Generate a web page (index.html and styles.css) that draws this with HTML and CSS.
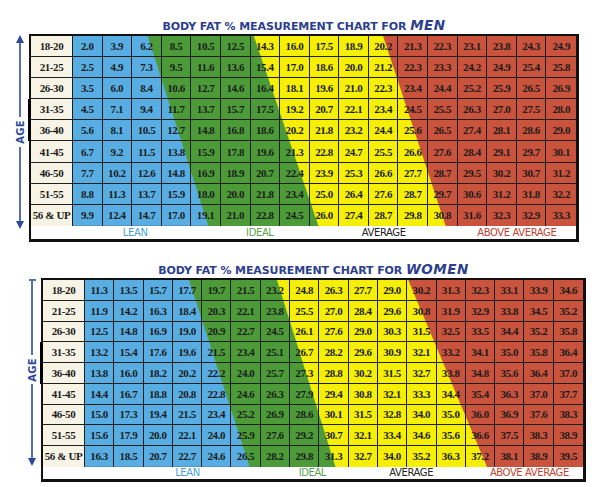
FILE: index.html
```html
<!DOCTYPE html>
<html>
	<head>
		<meta charset="UTF-8">
		<title>Body Fat % Measurement Chart</title>
		<link rel="stylesheet" href="styles.css">
	</head>
	<body>
	<div class="page">
		<!-- men -->
		<div class="chart men">
			<h2 class="title">BODY FAT % MEASUREMENT CHART FOR <em>MEN</em></h2>
			<div class="axis">
				<i class="tip_up"></i><i class="line"></i><span class="label">AGE</span><i class="line"></i><i class="tip_down"></i>
			</div>
			<div class="tbl">
				<div class="body">
					<div class="ages">
						<b>18-20</b><b>21-25</b><b>26-30</b><b>31-35</b><b>36-40</b><b>41-45</b><b>46-50</b><b>51-55</b><b>56 &amp; UP</b>
					</div>
					<div class="vals">
						<svg class="bands" viewBox="0 0 498 188" preserveAspectRatio="none">
							<rect width="498" height="188" fill="#58aee3"/>
							<polygon points="74,0 498,0 498,188 134,188" fill="#4c9b38"/>
							<polygon points="179,0 498,0 498,188 243,188" fill="#f5ef05"/>
							<polygon points="307,0 498,0 498,188 369,188" fill="#c9533d"/>
						</svg>
						<div class="cells">
							<span>2.0</span><span>3.9</span><span>6.2</span><span>8.5</span><span>10.5</span><span>12.5</span><span>14.3</span><span>16.0</span><span>17.5</span><span>18.9</span><span>20.2</span><span>21.3</span><span>22.3</span><span>23.1</span><span>23.8</span><span>24.3</span><span>24.9</span>
							<span>2.5</span><span>4.9</span><span>7.3</span><span>9.5</span><span>11.6</span><span>13.6</span><span>15.4</span><span>17.0</span><span>18.6</span><span>20.0</span><span>21.2</span><span>22.3</span><span>23.3</span><span>24.2</span><span>24.9</span><span>25.4</span><span>25.8</span>
							<span>3.5</span><span>6.0</span><span>8.4</span><span>10.6</span><span>12.7</span><span>14.6</span><span>16.4</span><span>18.1</span><span>19.6</span><span>21.0</span><span>22.3</span><span>23.4</span><span>24.4</span><span>25.2</span><span>25.9</span><span>26.5</span><span>26.9</span>
							<span>4.5</span><span>7.1</span><span>9.4</span><span>11.7</span><span>13.7</span><span>15.7</span><span>17.5</span><span>19.2</span><span>20.7</span><span>22.1</span><span>23.4</span><span>24.5</span><span>25.5</span><span>26.3</span><span>27.0</span><span>27.5</span><span>28.0</span>
							<span>5.6</span><span>8.1</span><span>10.5</span><span>12.7</span><span>14.8</span><span>16.8</span><span>18.6</span><span>20.2</span><span>21.8</span><span>23.2</span><span>24.4</span><span>25.6</span><span>26.5</span><span>27.4</span><span>28.1</span><span>28.6</span><span>29.0</span>
							<span>6.7</span><span>9.2</span><span>11.5</span><span>13.8</span><span>15.9</span><span>17.8</span><span>19.6</span><span>21.3</span><span>22.8</span><span>24.7</span><span>25.5</span><span>26.6</span><span>27.6</span><span>28.4</span><span>29.1</span><span>29.7</span><span>30.1</span>
							<span>7.7</span><span>10.2</span><span>12.6</span><span>14.8</span><span>16.9</span><span>18.9</span><span>20.7</span><span>22.4</span><span>23.9</span><span>25.3</span><span>26.6</span><span>27.7</span><span>28.7</span><span>29.5</span><span>30.2</span><span>30.7</span><span>31.2</span>
							<span>8.8</span><span>11.3</span><span>13.7</span><span>15.9</span><span>18.0</span><span>20.0</span><span>21.8</span><span>23.4</span><span>25.0</span><span>26.4</span><span>27.6</span><span>28.7</span><span>29.7</span><span>30.6</span><span>31.2</span><span>31.8</span><span>32.2</span>
							<span>9.9</span><span>12.4</span><span>14.7</span><span>17.0</span><span>19.1</span><span>21.0</span><span>22.8</span><span>24.5</span><span>26.0</span><span>27.4</span><span>28.7</span><span>29.8</span><span>30.8</span><span>31.6</span><span>32.3</span><span>32.9</span><span>33.3</span>
						</div>
					</div>
				</div>
				<div class="legend">
					<span class="lean">LEAN</span>
					<span class="ideal">IDEAL</span>
					<span class="average">AVERAGE</span>
					<span class="above">ABOVE AVERAGE</span>
				</div>
			</div>
		</div>

		<!-- women -->
		<div class="chart women">
			<h2 class="title">BODY FAT % MEASUREMENT CHART FOR <em>WOMEN</em></h2>
			<div class="axis">
				<i class="tee"></i><i class="line"></i><span class="label">AGE</span><i class="line"></i><i class="tip_down"></i>
			</div>
			<div class="tbl">
				<div class="body">
					<div class="ages">
						<b>18-20</b><b>21-25</b><b>26-30</b><b>31-35</b><b>36-40</b><b>41-45</b><b>46-50</b><b>51-55</b><b>56 &amp; UP</b>
					</div>
					<div class="vals">
						<svg class="bands" viewBox="0 0 493 185" preserveAspectRatio="none">
							<rect width="493" height="185" fill="#58aee3"/>
							<polygon points="103,0 493,0 493,185 163,185" fill="#4c9b38"/>
							<polygon points="190,0 493,0 493,185 248,185" fill="#f5ef05"/>
							<polygon points="320,0 493,0 493,185 398,185" fill="#c9533d"/>
						</svg>
						<div class="cells">
							<span>11.3</span><span>13.5</span><span>15.7</span><span>17.7</span><span>19.7</span><span>21.5</span><span>23.2</span><span>24.8</span><span>26.3</span><span>27.7</span><span>29.0</span><span>30.2</span><span>31.3</span><span>32.3</span><span>33.1</span><span>33.9</span><span>34.6</span>
							<span>11.9</span><span>14.2</span><span>16.3</span><span>18.4</span><span>20.3</span><span>22.1</span><span>23.8</span><span>25.5</span><span>27.0</span><span>28.4</span><span>29.6</span><span>30.8</span><span>31.9</span><span>32.9</span><span>33.8</span><span>34.5</span><span>35.2</span>
							<span>12.5</span><span>14.8</span><span>16.9</span><span>19.0</span><span>20.9</span><span>22.7</span><span>24.5</span><span>26.1</span><span>27.6</span><span>29.0</span><span>30.3</span><span>31.5</span><span>32.5</span><span>33.5</span><span>34.4</span><span>35.2</span><span>35.8</span>
							<span>13.2</span><span>15.4</span><span>17.6</span><span>19.6</span><span>21.5</span><span>23.4</span><span>25.1</span><span>26.7</span><span>28.2</span><span>29.6</span><span>30.9</span><span>32.1</span><span>33.2</span><span>34.1</span><span>35.0</span><span>35.8</span><span>36.4</span>
							<span>13.8</span><span>16.0</span><span>18.2</span><span>20.2</span><span>22.2</span><span>24.0</span><span>25.7</span><span>27.3</span><span>28.8</span><span>30.2</span><span>31.5</span><span>32.7</span><span>33.8</span><span>34.8</span><span>35.6</span><span>36.4</span><span>37.0</span>
							<span>14.4</span><span>16.7</span><span>18.8</span><span>20.8</span><span>22.8</span><span>24.6</span><span>26.3</span><span>27.9</span><span>29.4</span><span>30.8</span><span>32.1</span><span>33.3</span><span>34.4</span><span>35.4</span><span>36.3</span><span>37.0</span><span>37.7</span>
							<span>15.0</span><span>17.3</span><span>19.4</span><span>21.5</span><span>23.4</span><span>25.2</span><span>26.9</span><span>28.6</span><span>30.1</span><span>31.5</span><span>32.8</span><span>34.0</span><span>35.0</span><span>36.0</span><span>36.9</span><span>37.6</span><span>38.3</span>
							<span>15.6</span><span>17.9</span><span>20.0</span><span>22.1</span><span>24.0</span><span>25.9</span><span>27.6</span><span>29.2</span><span>30.7</span><span>32.1</span><span>33.4</span><span>34.6</span><span>35.6</span><span>36.6</span><span>37.5</span><span>38.3</span><span>38.9</span>
							<span>16.3</span><span>18.5</span><span>20.7</span><span>22.7</span><span>24.6</span><span>26.5</span><span>28.2</span><span>29.8</span><span>31.3</span><span>32.7</span><span>34.0</span><span>35.2</span><span>36.3</span><span>37.2</span><span>38.1</span><span>38.9</span><span>39.5</span>
						</div>
					</div>
				</div>
				<div class="legend">
					<span class="lean">LEAN</span>
					<span class="ideal">IDEAL</span>
					<span class="average">AVERAGE</span>
					<span class="above">ABOVE AVERAGE</span>
				</div>
			</div>
		</div>
	</div>
	</body>
</html>
```

FILE: styles.css
```css
*{
	padding: 0px;
	margin: 0px;
}
body{
	background: #fff;
	font-family: "Liberation Serif", "Times New Roman", serif;
}
.page{
	padding-top: 18px;
}

/* one chart: title on top, age axis on the left */
.chart{
	display: grid;
	grid-template-columns: 12px auto;
	column-gap: 3px;
	justify-content: start;
}
.men{
	margin-left: 14px;
}
.women{
	margin-left: 26px;
	margin-top: 20px;
}
.title{
	grid-column: 2;
	text-align: center;
	font-family: "DejaVu Sans", sans-serif;
	font-weight: bold;
	font-size: 11px;
	line-height: 14px;
	color: #2c3f8e;
	letter-spacing: -0.1px;
}
.title em{
	font-size: 13.5px;
	font-style: italic;
	letter-spacing: 0.5px;
}

/* age arrow */
.axis{
	grid-column: 1;
	display: flex;
	flex-direction: column;
	align-items: center;
	margin-top: 1px;
}
.men .axis{
	height: 194px;
}
.women .axis{
	height: 187px;
}
.axis i{
	display: block;
}
.axis .line{
	flex: 1;
	width: 2px;
	background: #5670b0;
}
.tip_up{
	border-left: 4px solid transparent;
	border-right: 4px solid transparent;
	border-bottom: 8px solid #2d4a98;
}
.tip_down{
	border-left: 4px solid transparent;
	border-right: 4px solid transparent;
	border-top: 8px solid #2d4a98;
}
.tee{
	width: 7px;
	height: 2px;
	background: #5670b0;
}
.axis .label{
	writing-mode: vertical-rl;
	transform: rotate(180deg);
	font-family: "DejaVu Sans", sans-serif;
	font-weight: bold;
	font-size: 10px;
	color: #2d4a98;
	padding: 3px 0;
	letter-spacing: 0.3px;
}

/* table */
.tbl{
	grid-column: 2;
	border-top: 2px solid #111;
	border-left: 2px solid #111;
	border-right: 3px solid #111;
	border-bottom: 3px solid #111;
}
.men .tbl{
	width: 545px;
}
.women .tbl{
	width: 540px;
}
.body{
	display: grid;
	grid-template-columns: 42px 1fr;
}
.men .body{
	height: 188px;
}
.women .body{
	height: 185px;
}
.ages{
	display: grid;
	grid-template-rows: repeat(9, 1fr);
	background: #f7f4e6;
	border-right: 1px solid #1e1e1e;
}
.ages b,
.cells span{
	display: flex;
	align-items: center;
	justify-content: center;
	font-size: 11px;
	font-weight: bold;
	letter-spacing: -0.4px;
	color: #1b1b1b;
	border-bottom: 1px solid #1e1e1e;
}
.ages b:last-child{
	border-bottom: none;
}
.ages b:nth-child(4),
.ages b:nth-child(5){
	box-shadow: -3px 0 0 #000;
}
.vals{
	display: grid;
}
.bands,
.cells{
	grid-area: 1 / 1;
	width: 100%;
	height: 100%;
}
.bands{
	display: block;
}
.cells{
	display: grid;
	grid-template-columns: repeat(17, 1fr);
	grid-template-rows: repeat(9, 1fr);
}
.cells span{
	border-right: 1px solid #1e1e1e;
}
.cells span:nth-child(17n){
	border-right: none;
}
.cells span:nth-last-child(-n+17){
	border-bottom: none;
}

/* legend strip */
.legend{
	display: grid;
	grid-template-columns: 42px repeat(17, 1fr);
	border-top: 2px solid #111;
	background: #fff;
	font-family: "DejaVu Sans", sans-serif;
	font-size: 10px;
	letter-spacing: -0.4px;
	text-align: center;
}
.men .legend{
	height: 13px;
	line-height: 13px;
}
.women .legend{
	height: 12px;
	line-height: 12px;
}
.lean{
	color: #4b9fd6;
}
.ideal{
	color: #5c9f52;
}
.average{
	color: #222;
}
.above{
	color: #bf4430;
}
.men .lean{
	grid-column: 2 / 6;
	padding-left: 6px;
}
.men .ideal{
	grid-column: 6 / 11;
	padding-right: 11px;
}
.men .average{
	grid-column: 11 / 14;
}
.men .above{
	grid-column: 15 / 19;
}
.women .lean{
	grid-column: 4 / 7;
}
.women .ideal{
	grid-column: 9 / 11;
	padding-right: 14px;
}
.women .average{
	grid-column: 12 / 14;
	padding-left: 8px;
}
.women .above{
	grid-column: 15 / 19;
	padding-left: 10px;
}
```
